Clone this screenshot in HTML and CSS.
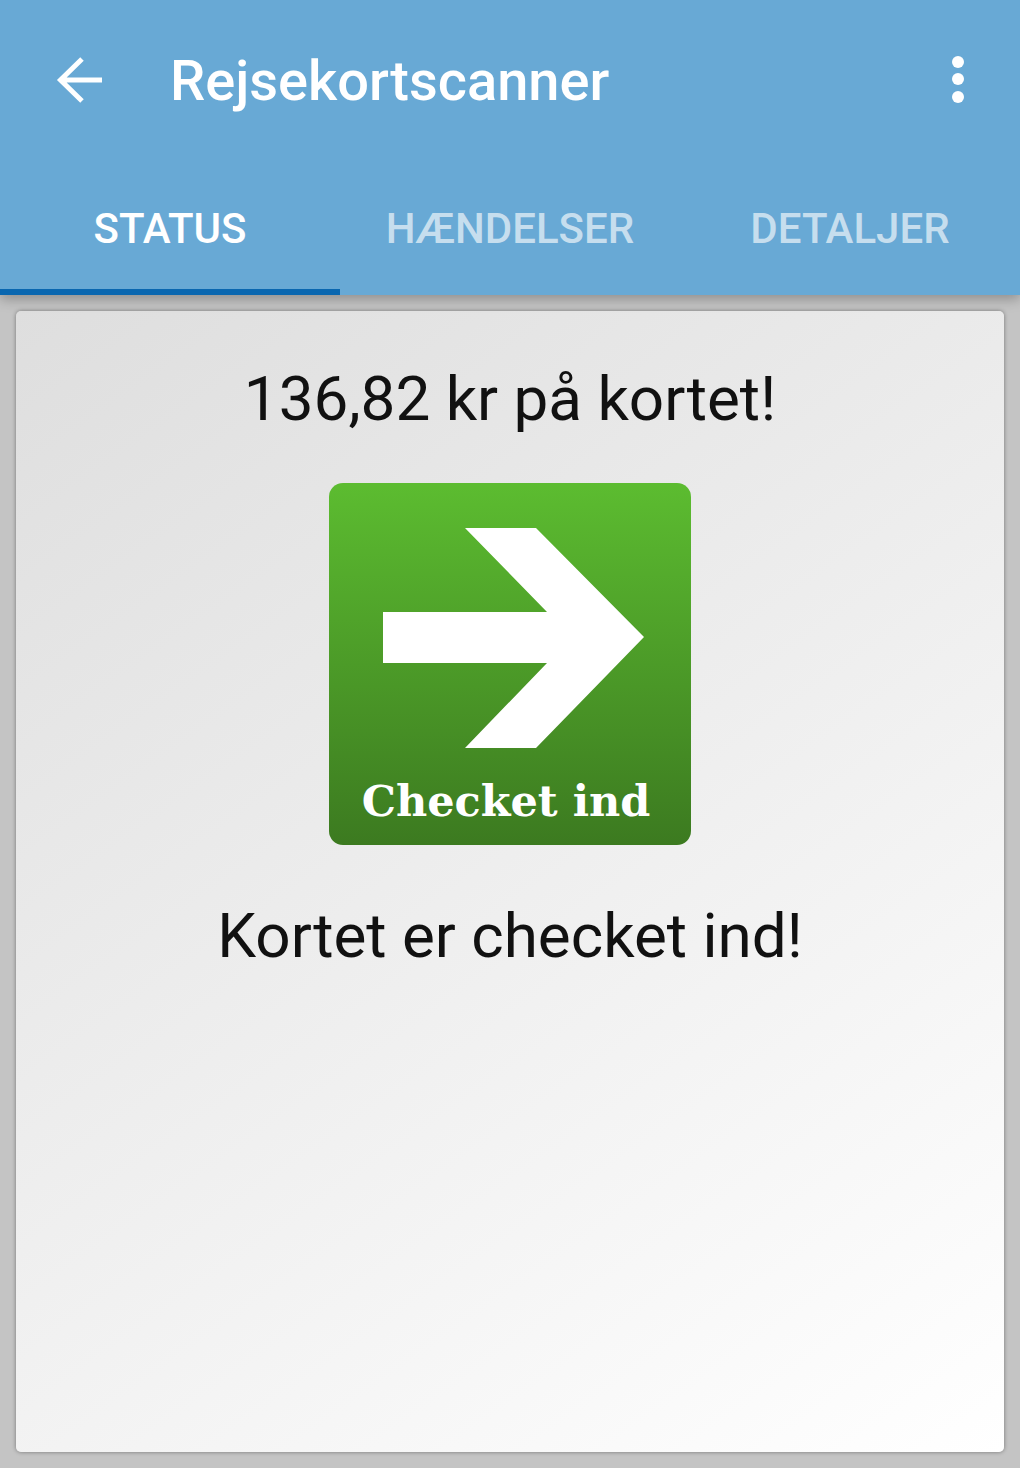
FILE: index.html
```html
<!DOCTYPE html>
<html lang="da">
<head>
<meta charset="utf-8">
<title>Rejsekortscanner</title>
<link rel="stylesheet" href="styles.css">
</head>
<body>
<div class="screen">
  <header class="appbar">
    <div class="toolbar">
      <svg class="back" width="48" height="48" viewBox="0 0 48 48" aria-hidden="true"><path d="M46 24H5M26 3 4.500 24 26 45" fill="none" stroke="#fff" stroke-width="5"/></svg>
      <h1 class="title">Rejsekortscanner</h1>
      <div class="more"><span class="dot"></span><span class="dot"></span><span class="dot"></span></div>
    </div>
    <nav class="tabs">
      <div class="tab active">STATUS</div>
      <div class="tab">HÆNDELSER</div>
      <div class="tab">DETALJER</div>
    </nav>
  </header>
  <main class="content">
    <section class="card">
      <p class="balance">136,82 kr på kortet!</p>
      <div class="badge">
        <svg class="badge-arrow" width="362" height="270" viewBox="0 0 362 270" aria-hidden="true"><path d="M136 45H207L315 154 207 265H136L218 180H54V129H218Z" fill="#fff"/></svg>
        <div class="badge-label">Checket ind</div>
      </div>
      <p class="message">Kortet er checket ind!</p>
    </section>
  </main>
</div>
</body>
</html>
```
FILE: styles.css
```css
* { box-sizing: border-box; }
html, body { margin: 0; padding: 0; }
body { background: #c4c4c4; font-family: Roboto, "Liberation Sans", sans-serif; }
.screen { width: 1020px; height: 1468px; display: flex; flex-direction: column; overflow: hidden; }
.appbar { position: relative; z-index: 1; height: 295px; background: #68a9d5; box-shadow: 0 4px 12px rgba(0,0,0,.28); display: flex; flex-direction: column; }
.toolbar { height: 160px; display: flex; align-items: flex-start; padding: 56px 56px 0 56px; }
.back { flex: none; margin-right: 66px; }
.title { margin: -9px 0 0; flex: 1; font-size: 56px; line-height: 68px; font-weight: 500; color: #fff; }
.more { display: flex; flex-direction: column; gap: 5.3px; }
.dot { width: 12px; height: 12px; border-radius: 50%; background: #fff; }
.tabs { flex: 1; display: flex; }
.tab { flex: 1; display: flex; align-items: flex-start; justify-content: center; padding-top: 45px; font-size: 42px; line-height: 48px; font-weight: 500; color: #c6deee; }
.tab.active { color: #fff; border-bottom: 6px solid #0a67b0; }
.content { flex: 1; padding: 16px; }
.card { height: 100%; border-radius: 5px; background: linear-gradient(145deg, #dedede 0%, #ffffff 100%); box-shadow: 0 0 4px rgba(0,0,0,.4); display: flex; flex-direction: column; align-items: center; padding-top: 53px; }
.balance, .message { margin: 0; font-size: 62px; line-height: 70px; color: #111; }
.balance { margin-bottom: 49px; }
.message { margin-top: 56px; }
.badge { width: 362px; height: 362px; border-radius: 14px; background: linear-gradient(180deg, #5cbc30 0%, #3c7a20 100%); display: flex; flex-direction: column; align-items: center; }
.badge-arrow { display: block; flex: none; }
.badge-label { margin: 21px 8px 0 0; font-family: "DejaVu Serif", serif; font-weight: 700; font-size: 43px; line-height: 54px; color: #fff; }
```
